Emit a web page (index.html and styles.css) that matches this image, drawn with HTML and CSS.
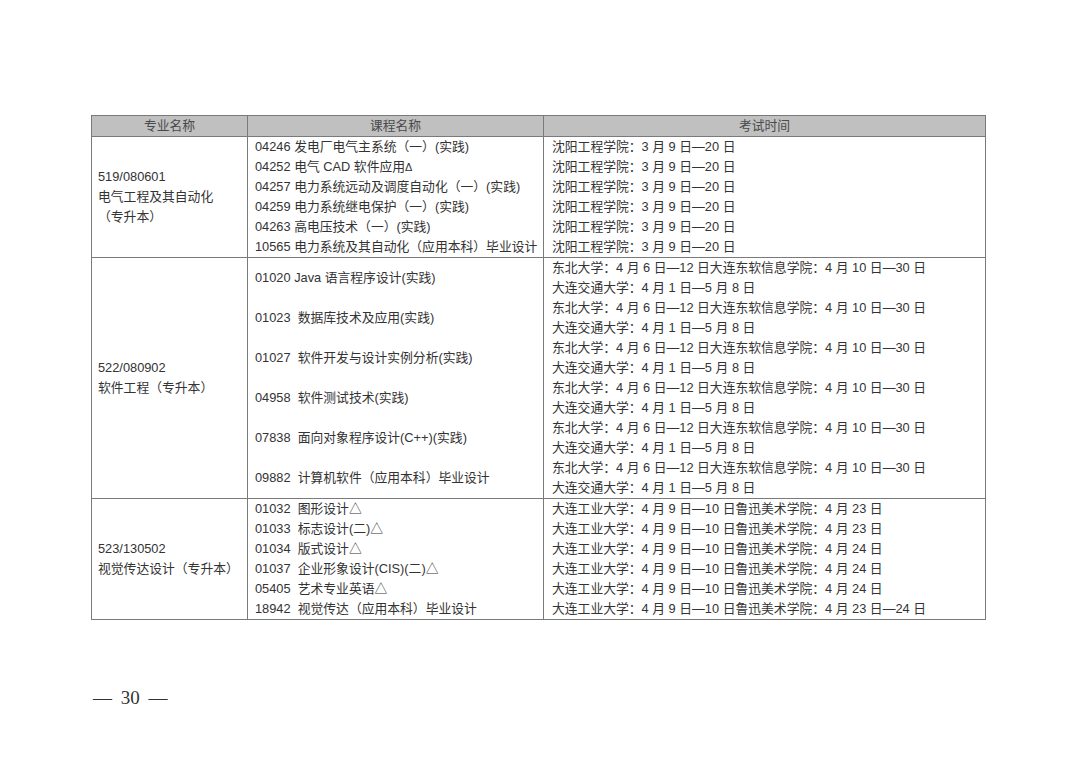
FILE: index.html
```html
<!DOCTYPE html>
<html lang="zh">
<head>
<meta charset="utf-8">
<link rel="stylesheet" href="styles.css">
</head>
<body>
<div class="page">
  <table class="exam">
    <colgroup>
      <col class="w1">
      <col class="w2">
      <col class="w3">
    </colgroup>
    <thead>
      <tr>
        <th>专业名称</th>
        <th>课程名称</th>
        <th>考试时间</th>
      </tr>
    </thead>
    <tbody>
      <tr>
        <td class="c1">
          <div>519/080601</div>
          <div>电气工程及其自动化</div>
          <div>（专升本）</div>
        </td>
        <td class="c2">
          <div>04246 发电厂电气主系统（一）(实践)</div>
          <div>04252 电气 CAD 软件应用<span class="tri">Δ</span></div>
          <div>04257 电力系统远动及调度自动化（一）(实践)</div>
          <div>04259 电力系统继电保护（一）(实践)</div>
          <div>04263 高电压技术（一）(实践)</div>
          <div>10565 电力系统及其自动化（应用本科）毕业设计</div>
        </td>
        <td class="c3">
          <div>沈阳工程学院：3 月 9 日—20 日</div>
          <div>沈阳工程学院：3 月 9 日—20 日</div>
          <div>沈阳工程学院：3 月 9 日—20 日</div>
          <div>沈阳工程学院：3 月 9 日—20 日</div>
          <div>沈阳工程学院：3 月 9 日—20 日</div>
          <div>沈阳工程学院：3 月 9 日—20 日</div>
        </td>
      </tr>
      <tr>
        <td class="c1">
          <div>522/080902</div>
          <div>软件工程（专升本）</div>
        </td>
        <td class="c2">
          <div class="dbl">01020 Java 语言程序设计(实践)</div>
          <div class="dbl">01023&nbsp; 数据库技术及应用(实践)</div>
          <div class="dbl">01027&nbsp; 软件开发与设计实例分析(实践)</div>
          <div class="dbl">04958&nbsp; 软件测试技术(实践)</div>
          <div class="dbl">07838&nbsp; 面向对象程序设计(C++)(实践)</div>
          <div class="dbl">09882&nbsp; 计算机软件（应用本科）毕业设计</div>
        </td>
        <td class="c3">
          <div>东北大学：4 月 6 日—12 日大连东软信息学院：4 月 10 日—30 日</div>
          <div>大连交通大学：4 月 1 日—5 月 8 日</div>
          <div>东北大学：4 月 6 日—12 日大连东软信息学院：4 月 10 日—30 日</div>
          <div>大连交通大学：4 月 1 日—5 月 8 日</div>
          <div>东北大学：4 月 6 日—12 日大连东软信息学院：4 月 10 日—30 日</div>
          <div>大连交通大学：4 月 1 日—5 月 8 日</div>
          <div>东北大学：4 月 6 日—12 日大连东软信息学院：4 月 10 日—30 日</div>
          <div>大连交通大学：4 月 1 日—5 月 8 日</div>
          <div>东北大学：4 月 6 日—12 日大连东软信息学院：4 月 10 日—30 日</div>
          <div>大连交通大学：4 月 1 日—5 月 8 日</div>
          <div>东北大学：4 月 6 日—12 日大连东软信息学院：4 月 10 日—30 日</div>
          <div>大连交通大学：4 月 1 日—5 月 8 日</div>
        </td>
      </tr>
      <tr>
        <td class="c1">
          <div>523/130502</div>
          <div>视觉传达设计（专升本）</div>
        </td>
        <td class="c2">
          <div>01032&nbsp; 图形设计△</div>
          <div>01033&nbsp; 标志设计(二)△</div>
          <div>01034&nbsp; 版式设计△</div>
          <div>01037&nbsp; 企业形象设计(CIS)(二)△</div>
          <div>05405&nbsp; 艺术专业英语△</div>
          <div>18942&nbsp; 视觉传达（应用本科）毕业设计</div>
        </td>
        <td class="c3">
          <div>大连工业大学：4 月 9 日—10 日鲁迅美术学院：4 月 23 日</div>
          <div>大连工业大学：4 月 9 日—10 日鲁迅美术学院：4 月 23 日</div>
          <div>大连工业大学：4 月 9 日—10 日鲁迅美术学院：4 月 24 日</div>
          <div>大连工业大学：4 月 9 日—10 日鲁迅美术学院：4 月 24 日</div>
          <div>大连工业大学：4 月 9 日—10 日鲁迅美术学院：4 月 24 日</div>
          <div>大连工业大学：4 月 9 日—10 日鲁迅美术学院：4 月 23 日—24 日</div>
        </td>
      </tr>
    </tbody>
  </table>
  <div class="pageno">— 30 —</div>
</div>
</body>
</html>
```
FILE: styles.css
```css
html, body {
  margin: 0;
  padding: 0;
  background: #ffffff;
}
.page {
  padding: 115px 0 0 91px;
  font-family: "Liberation Sans", "Noto Sans CJK SC", sans-serif;
  color: #333333;
}
.exam {
  border-collapse: collapse;
  table-layout: fixed;
  width: 894px;
  font-size: 12.8px;
  line-height: 20px;
}
.w1 { width: 156px; }
.w2 { width: 296px; }
.w3 { width: 442px; }
.exam th,
.exam td {
  border: 1px solid #7a7a7a;
  padding: 0 0 0 6px;
  vertical-align: middle;
  text-align: left;
  white-space: nowrap;
  overflow: hidden;
}
.exam th {
  background: #c0c0c0;
  font-weight: normal;
  text-align: center;
  color: #4a4a4a;
  height: 19px;
  padding: 0;
}
.exam td.c2 { padding-left: 7px; }
.exam td.c3 { padding-left: 8px; }
.dbl {
  line-height: 40px;
}
.tri {
  font-size: 11px;
}
.pageno {
  margin-top: 67px;
  margin-left: 2px;
  font-family: "Liberation Serif", "DejaVu Serif", serif;
  font-size: 19px;
  line-height: 22px;
  color: #333333;
  word-spacing: 4px;
}
```
